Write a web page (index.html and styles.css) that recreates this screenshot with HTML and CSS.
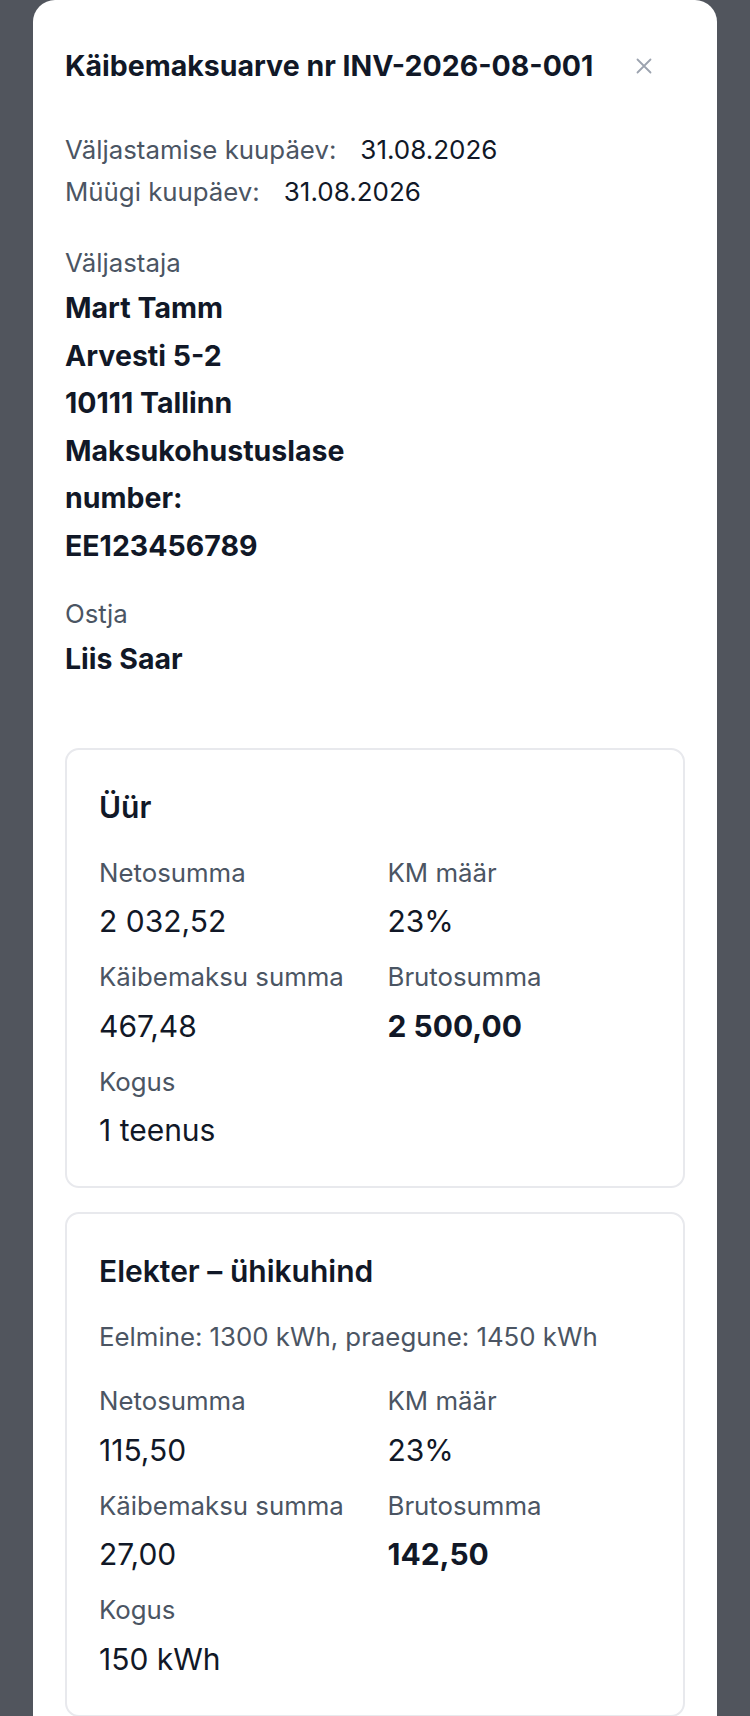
FILE: index.html
```html
<!DOCTYPE html>
<html lang="et">
<head>
    <meta charset="UTF-8">
    <meta name="viewport" content="width=device-width, initial-scale=1.0">
    <title>Käibemaksuarve nr INV-2026-08-001</title>
    <link rel="stylesheet" href="styles.css">
</head>
<body>

    <div class="overlay">
        <div class="modal">
            <!-- päis -->
            <div class="modal-header">
                <h2 class="modal-title">Käibemaksuarve nr INV-2026-08-001</h2>
                <button class="close" aria-label="Sulge">
                    <svg width="16" height="16" viewBox="0 0 16 16" fill="none" stroke="#9ca3af" stroke-width="1.8" stroke-linecap="round">
                        <path d="M1.5 1.5l13 13M14.5 1.5l-13 13"/>
                    </svg>
                </button>
            </div>

            <!-- kuupäevad -->
            <div class="dates">
                <div class="date-row">
                    <span class="label">Väljastamise kuupäev:</span>
                    <span class="date">31.08.2026</span>
                </div>
                <div class="date-row">
                    <span class="label">Müügi kuupäev:</span>
                    <span class="date">31.08.2026</span>
                </div>
            </div>

            <!-- väljastaja -->
            <div class="party issuer">
                <div class="label">Väljastaja</div>
                <p>Mart Tamm</p>
                <p>Arvesti 5-2</p>
                <p>10111 Tallinn</p>
                <p>Maksukohustuslase number: EE123456789</p>
            </div>

            <!-- ostja -->
            <div class="party buyer">
                <div class="label">Ostja</div>
                <p>Liis Saar</p>
            </div>

            <!-- arve read -->
            <div class="lines">
                <div class="line-card">
                    <h3 class="line-title">Üür</h3>
                    <div class="fields">
                        <div class="field">
                            <div class="label">Netosumma</div>
                            <div class="value">2 032,52</div>
                        </div>
                        <div class="field">
                            <div class="label">KM määr</div>
                            <div class="value">23%</div>
                        </div>
                        <div class="field">
                            <div class="label">Käibemaksu summa</div>
                            <div class="value">467,48</div>
                        </div>
                        <div class="field">
                            <div class="label">Brutosumma</div>
                            <div class="value strong">2 500,00</div>
                        </div>
                        <div class="field">
                            <div class="label">Kogus</div>
                            <div class="value">1 teenus</div>
                        </div>
                    </div>
                </div>

                <div class="line-card">
                    <h3 class="line-title">Elekter – ühikuhind</h3>
                    <p class="line-note">Eelmine: 1300 kWh, praegune: 1450 kWh</p>
                    <div class="fields">
                        <div class="field">
                            <div class="label">Netosumma</div>
                            <div class="value">115,50</div>
                        </div>
                        <div class="field">
                            <div class="label">KM määr</div>
                            <div class="value">23%</div>
                        </div>
                        <div class="field">
                            <div class="label">Käibemaksu summa</div>
                            <div class="value">27,00</div>
                        </div>
                        <div class="field">
                            <div class="label">Brutosumma</div>
                            <div class="value strong">142,50</div>
                        </div>
                        <div class="field">
                            <div class="label">Kogus</div>
                            <div class="value">150 kWh</div>
                        </div>
                    </div>
                </div>
            </div>
        </div>
    </div>

</body>
</html>
```

FILE: styles.css
```css
body {
    font-family: Inter, "Noto Sans", Arial, sans-serif;
    margin: 0;
    height: 1716px;
    overflow: hidden;
    background-color: #51555d;
    color: #111827;
}

.overlay {
    padding: 0 33px;
}

.modal {
    background-color: #fff;
    border-radius: 22px 22px 0 0;
    padding: 46px 32px 40px;
    min-height: 1716px;
    box-sizing: border-box;
}

.modal-header {
    display: flex;
    align-items: center;
    justify-content: space-between;
    padding-right: 29px;
}

.modal-title {
    margin: 0;
    font-size: 28.5px;
    line-height: 40px;
    font-weight: 700;
}

.close {
    width: 24px;
    height: 24px;
    padding: 0;
    border: none;
    background: none;
    display: flex;
    align-items: center;
    justify-content: center;
    cursor: pointer;
}

.label {
    color: #4b5563;
    font-size: 25.8px;
    line-height: 36px;
}

.dates {
    margin-top: 43px;
}

.date-row {
    display: flex;
    gap: 24px;
    line-height: 42px;
}

.date-row .label {
    line-height: 42px;
}

.date {
    font-size: 26px;
}

.party {
    margin-top: 32px;
}

.party p {
    margin: 0;
    font-size: 28.5px;
    line-height: 47.5px;
    font-weight: 700;
}

.party .label {
    margin-bottom: 3px;
}

.issuer {
    max-width: 300px;
}

.buyer {
    margin-top: 27px;
}

.lines {
    margin-top: 65px;
    display: flex;
    flex-direction: column;
    gap: 24px;
}

.line-card {
    border: 2px solid #e8e9ed;
    border-radius: 14px;
    padding: 37px 32px 36px;
}

.line-title {
    margin: 0 0 28px;
    font-size: 30px;
    line-height: 40px;
    font-weight: 600;
}

.line-note {
    margin: 0 0 28px;
    color: #4b5563;
    font-size: 25.8px;
    line-height: 36px;
}

.fields {
    display: grid;
    grid-template-columns: 1fr 1fr;
    column-gap: 25px;
    row-gap: 18px;
}

.value {
    margin-top: 10.5px;
    font-size: 30px;
    line-height: 40px;
}

.value.strong {
    font-weight: 700;
}
```
